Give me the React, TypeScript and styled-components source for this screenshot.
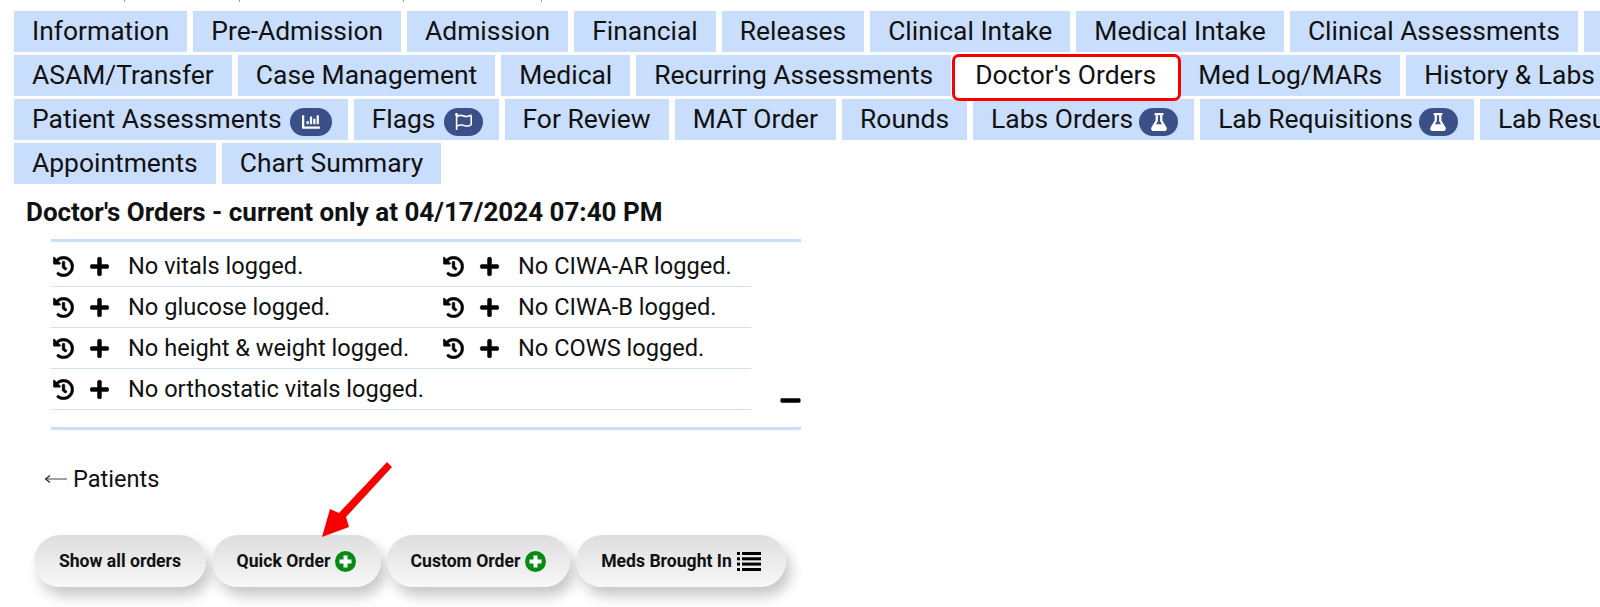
import React from 'react';
import styled, { createGlobalStyle } from 'styled-components';
import { FaChartBar, FaFlask, FaHistory, FaMinus, FaPlus, FaRegFlag } from 'react-icons/fa';

const GlobalStyle = createGlobalStyle`
  html, body {
    margin: 0;
    padding: 0;
    width: 1600px;
    height: 607px;
    overflow: hidden;
    background: #fff;
    font-family: Roboto, "Liberation Sans", sans-serif;
    color: #111;
  }
`;

type TabItem = { label: string; badge?: React.ReactNode; wide?: boolean; space?: number; active?: boolean };

const tabRows: TabItem[][] = [
  [
    { label: 'Information' },
    { label: 'Pre-Admission' },
    { label: 'Admission' },
    { label: 'Financial' },
    { label: 'Releases' },
    { label: 'Clinical Intake' },
    { label: 'Medical Intake' },
    { label: 'Clinical Assessments' },
    { label: '' },
  ],
  [
    { label: 'ASAM/Transfer' },
    { label: 'Case Management' },
    { label: 'Medical' },
    { label: 'Recurring Assessments' },
    { label: "Doctor's Orders", active: true },
    { label: 'Med Log/MARs' },
    { label: 'History & Labs' },
  ],
  [
    { label: 'Patient Assessments', badge: <FaChartBar size={18} />, wide: true, space: 8 },
    { label: 'Flags', badge: <FaRegFlag size={17} />, space: 8 },
    { label: 'For Review' },
    { label: 'MAT Order' },
    { label: 'Rounds' },
    { label: 'Labs Orders', badge: <FaFlask size={18} />, space: 6 },
    { label: 'Lab Requisitions', badge: <FaFlask size={18} />, space: 6 },
    { label: 'Lab Results' },
  ],
  [{ label: 'Appointments' }, { label: 'Chart Summary' }],
];

const vitals = [
  ['No vitals logged.', 'No CIWA-AR logged.'],
  ['No glucose logged.', 'No CIWA-B logged.'],
  ['No height & weight logged.', 'No COWS logged.'],
  ['No orthostatic vitals logged.'],
];

const App = () => {
  return (
    <Page>
      <GlobalStyle />
      <ClippedLine>
        <Tick $left={124} />
        <Tick $left={239} />
        <Tick $left={403} />
        <Tick $left={541} />
      </ClippedLine>

      <TabRows>
        {tabRows.map((row, i) => (
          <TabRow key={i}>
            {row.map((tab, j) => (
              <Tab key={j} $active={tab.active} $hasBadge={!!tab.badge}>
                {tab.label}
                {tab.badge && <Badge $wide={tab.wide} $space={tab.space}>{tab.badge}</Badge>}
              </Tab>
            ))}
          </TabRow>
        ))}
      </TabRows>

      <Heading>Doctor's Orders - current only at 04/17/2024 07:40 PM</Heading>

      <VitalsPanel>
        <VitalsTable>
          {vitals.map((row, i) => (
            <VitalsRow key={i}>
              {row.map((text) => (
                <VitalsCell key={text}>
                  <IconSlot><FaHistory size={21} /></IconSlot>
                  <IconSlot><FaPlus size={21} /></IconSlot>
                  {text}
                </VitalsCell>
              ))}
            </VitalsRow>
          ))}
        </VitalsTable>
        <Collapse><FaMinus size={23} /></Collapse>
      </VitalsPanel>

      <BackLink>
        <svg width="24" height="12" viewBox="0 0 24 12">
          <path d="M23 6H2" stroke="#777" strokeWidth="1.4" fill="none" />
          <path d="M6 2.5L1.5 6L6 9.5" stroke="#222" strokeWidth="1.2" fill="none" />
        </svg>
        Patients
      </BackLink>

      <Buttons>
        <PillButton $width={172}>Show all orders</PillButton>
        <PillButton $width={169}>Quick Order <AddIcon /></PillButton>
        <PillButton $width={183}>Custom Order <AddIcon /></PillButton>
        <PillButton $width={210}>Meds Brought In <ListIcon /></PillButton>
      </Buttons>

      <ArrowNote width="90" height="90" viewBox="0 0 90 90">
        <path d="M75 5L80 10L34 60L37 70L10 80L18 52L27 56Z" fill="#f60000" />
      </ArrowNote>
    </Page>
  );
};

export default App;

const AddIcon = () => (
  <svg width="21" height="21" viewBox="0 0 21 21">
    <circle cx="10.5" cy="10.5" r="10.5" fill="#078a14" />
    <path d="M10.5 4.5v12M4.5 10.5h12" stroke="#fff" strokeWidth="4" />
  </svg>
);

const ListIcon = () => (
  <svg width="24" height="19" viewBox="0 0 24 19">
    {[0, 5.3, 10.6, 16].map((y) => (
      <g key={y} fill="#000">
        <rect x="0" y={y} width="3" height="3" />
        <rect x="5" y={y} width="19" height="3" />
      </g>
    ))}
  </svg>
);

const Page = styled.div`
  position: relative;
  width: 1600px;
  height: 607px;
  overflow: hidden;
  padding-top: 11px;
  box-sizing: border-box;
`;

const ClippedLine = styled.div`
  position: absolute;
  top: 0;
  left: 0;
`;

const Tick = styled.span<{ $left: number }>`
  position: absolute;
  top: 0;
  left: ${(p) => p.$left}px;
  width: 1px;
  height: 2px;
  background: #999;
`;

const TabRows = styled.div`
  display: flex;
  flex-direction: column;
  gap: 3px;
  padding-left: 14px;
`;

const TabRow = styled.div`
  display: flex;
  gap: 6px;
  height: 41px;
`;

const Tab = styled.div<{ $active?: boolean; $hasBadge?: boolean }>`
  position: relative;
  display: flex;
  align-items: center;
  flex: none;
  padding: 0 ${(p) => (p.$hasBadge ? 16 : 18)}px 2px 18px;
  white-space: nowrap;
  font-size: 26.43px;
  background: ${(p) => (p.$active ? '#fff' : '#c9defd')};
  ${(p) =>
    p.$active &&
    `
    z-index: 1;
    &::after {
      content: '';
      position: absolute;
      inset: -1px -7px -5px -5px;
      border: 3.5px solid #f60000;
      border-radius: 7px;
    }
  `}
`;

const Badge = styled.span<{ $wide?: boolean; $space?: number }>`
  display: inline-flex;
  align-items: center;
  justify-content: center;
  width: ${(p) => (p.$wide ? 42 : 39)}px;
  height: 28px;
  margin-top: 6px;
  margin-left: ${(p) => p.$space ?? 6}px;
  border-radius: 14px;
  background: #3b5088;
  color: #fff;
`;

const Heading = styled.div`
  margin: 14px 0 0 26px;
  height: 29px;
  line-height: 29px;
  font-size: 26px;
  font-weight: 700;
`;

const VitalsPanel = styled.div`
  display: flex;
  align-items: flex-end;
  width: 750px;
  margin: 12px 0 0 51px;
  padding-top: 4px;
  padding-bottom: 17px;
  border-top: 3px solid #c9defd;
  border-bottom: 3px solid #c9defd;
`;

const VitalsTable = styled.div`
  width: 700px;
  flex: none;
`;

const VitalsRow = styled.div`
  display: flex;
  height: 41px;
  border-bottom: 1px solid #cfe0fd;
  box-sizing: border-box;
`;

const VitalsCell = styled.div`
  display: flex;
  align-items: center;
  flex: none;
  width: 390px;
  font-size: 23.6px;
`;

const IconSlot = styled.span`
  display: inline-flex;
  justify-content: center;
  width: 24px;
  margin-right: 12px;
  color: #000;

  svg {
    stroke: currentColor;
    stroke-width: 12px;
  }

  & + & {
    margin-right: 17px;
  }
`;

const Collapse = styled.div`
  margin-left: 28px;
  height: 21px;
  color: #000;
`;

const BackLink = styled.div`
  display: flex;
  align-items: center;
  gap: 5px;
  margin: 34px 0 0 44px;
  height: 30px;
  font-size: 23.6px;
`;

const Buttons = styled.div`
  display: flex;
  gap: 6px;
  margin: 41px 0 0 34px;
`;

const PillButton = styled.div<{ $width: number }>`
  display: flex;
  align-items: center;
  justify-content: center;
  gap: 5px;
  flex: none;
  width: ${(p) => p.$width}px;
  height: 52px;
  border-radius: 26px;
  background: linear-gradient(#dedede, #f8f8f8);
  box-shadow: 5px 9px 13px rgba(0, 0, 0, 0.22);
  font-size: 17.6px;
  font-weight: 700;
  color: #111;
`;

const ArrowNote = styled.svg`
  position: absolute;
  left: 312px;
  top: 457px;
`;
